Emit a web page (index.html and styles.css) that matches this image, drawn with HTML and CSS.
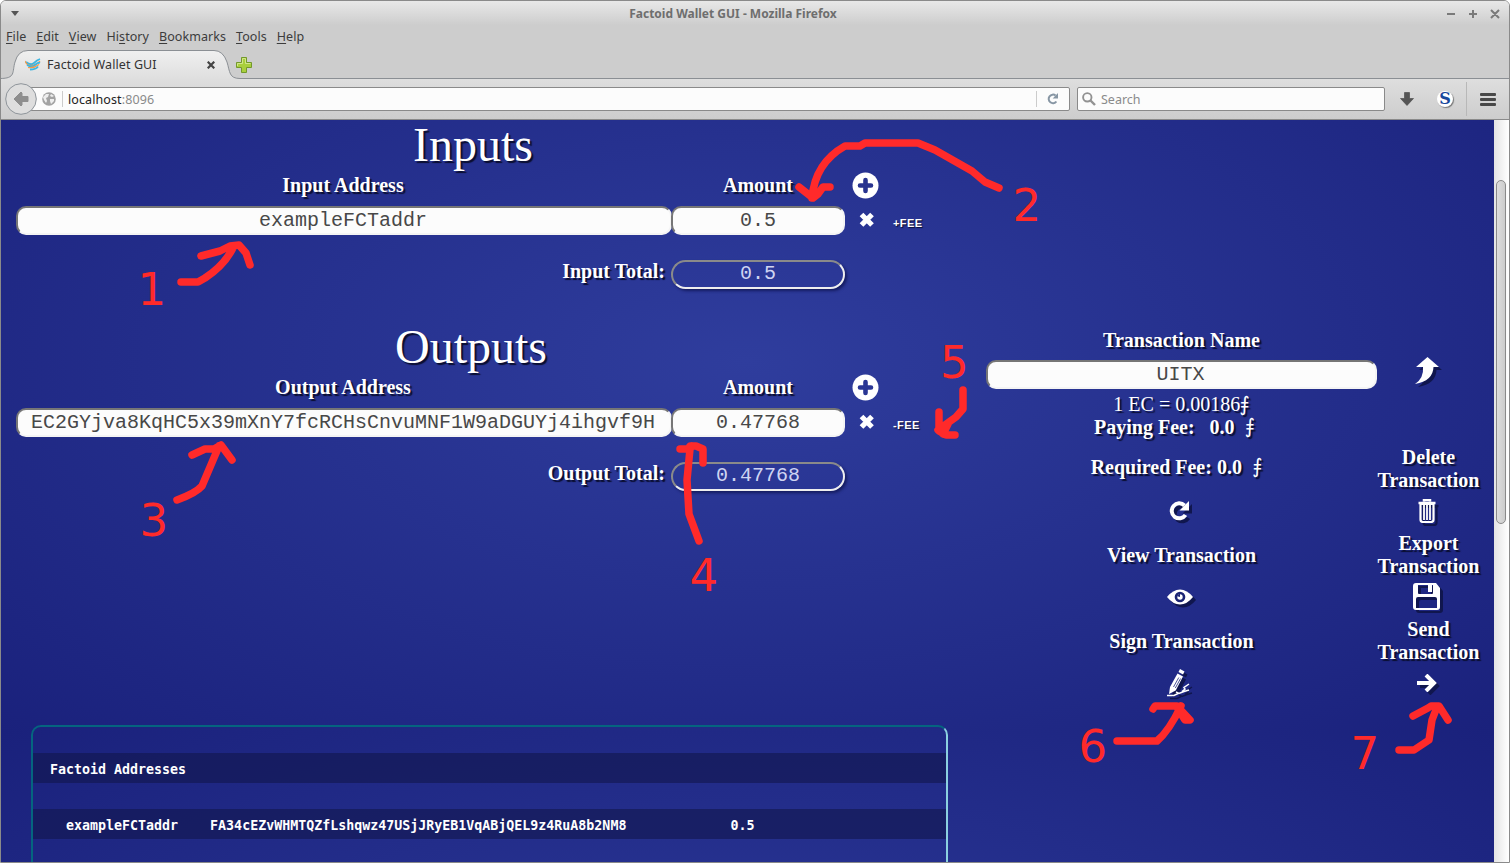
FILE: index.html
```html
<!DOCTYPE html>
<html lang="en">
<head>
<meta charset="utf-8">
<title>Factoid Wallet GUI</title>
<link rel="stylesheet" href="styles.css">
</head>
<body>
<div class="window">
  <header class="chrome">
    <div class="titlebar">
      <svg class="win-menu" width="8" height="5"><path d="M0 0h8L4 5z" fill="#555"/></svg>
      <span class="win-title">Factoid Wallet GUI - Mozilla Firefox</span>
      <svg class="win-buttons" width="54" height="10" fill="none" stroke="#7a7a7a" stroke-width="2"><path d="M1 5h8M23 5h8M27 1v8M45 1l8 8M53 1l-8 8"/></svg>
    </div>
    <nav class="menubar">
      <span><u>F</u>ile</span><span><u>E</u>dit</span><span><u>V</u>iew</span><span>Hi<u>s</u>tory</span><span><u>B</u>ookmarks</span><span><u>T</u>ools</span><span><u>H</u>elp</span>
    </nav>
    <div class="tabs">
      <svg class="tab-shape" width="1510" height="30">
        <defs><linearGradient id="tab" x1="0" y1="0" x2="0" y2="1"><stop offset="0" stop-color="#f0f0f0"/><stop offset="1" stop-color="#dedede"/></linearGradient></defs>
        <path d="M0 28.5C16 28.5 12 22 15 12Q18 .5 28 .5H214Q223 .5 227 12C230 22 229 28.5 240 28.5H1510V30H0z" fill="url(#tab)"/>
        <path d="M0 28.5C16 28.5 12 22 15 12Q18 .5 28 .5H214Q223 .5 227 12C230 22 229 28.5 240 28.5H1510" fill="none" stroke="#8b8f94"/>
      </svg>
      <svg class="favicon" width="16" height="13" fill="none" stroke-width="1.8"><path d="M1 4q5 4 8 1t6-4" stroke="#3db5e0"/><path d="M0 3q2 6 9 4 4-1 6-4" stroke="#f39a4b" stroke-width="1.200"/><path d="M2 7q5 3 8 0t5-2" stroke="#3db5e0"/><path d="M3 9.500q6 1 11-3" stroke="#f39a4b" stroke-width="1.200"/><path d="M5 11.500q6 0 8-3" stroke="#3db5e0"/></svg>
      <span class="tab-title">Factoid Wallet GUI</span>
      <svg class="tab-close" width="8" height="8" stroke="#444" stroke-width="2.200"><path d="M.7 .7l6.600 6.600M7.300 .7L.7 7.300"/></svg>
      <svg class="tab-new" width="16" height="16"><path d="M5.500 .5h5v5h5v5h-5v5h-5v-5h-5v-5h5z" fill="#a9cf3c" stroke="#72982b"/><path d="M6.500 6.500v-5h3v5h5M1.500 9v-2.500h5" fill="none" stroke="#d0e68a"/></svg>
    </div>
    <div class="toolbar">
      <svg class="back" width="32" height="32"><circle cx="16" cy="16" r="15.300" fill="#dedede" stroke="#8e949a"/><path d="M9 16l7-7 1 1v3.500h6v5h-6V22l-1 1z" fill="#8e8e8e" stroke="#8e8e8e" stroke-linejoin="round"/></svg>
      <div class="urlbar">
        <svg class="globe" width="14" height="14"><circle cx="7" cy="7" r="6.800" fill="#a3a3a3"/><path d="M1 5l3-3 3 0-1 3-2 1 1 3-1 2-2-3zM9 2l3 2-2 1-2-1zM8 7l4 0 0 2-3 3-1-3z" fill="#eee"/></svg>
        <i class="divider"></i>
        <span class="url">localhost<em>:8096</em></span>
        <i class="divider"></i>
        <svg class="reload" width="12" height="12"><path d="M9.400 8.500A4.300 4.300 0 1 1 8.600 2.500" fill="none" stroke="#8796a4" stroke-width="2"/><path d="M11 0v5.500H5.700z" fill="#8796a4"/></svg>
      </div>
      <div class="search">
        <svg width="14" height="14" fill="none" stroke="#929292"><circle cx="5.300" cy="5.300" r="4.200" stroke-width="1.900"/><path d="M8.500 8.500l4.500 4.500" stroke-width="2.400"/></svg>
        <span>Search</span>
      </div>
      <svg class="download" width="14" height="14"><path d="M4.500 .5h5v6h4L7 13.500 .5 6.500h4z" fill="#555" stroke="#444" stroke-width=".6"/></svg>
      <span class="s-badge">S</span>
      <i class="tool-sep"></i>
      <svg class="burger" width="16" height="13" fill="#484848"><rect width="16" height="3" rx="1"/><rect y="5" width="16" height="3" rx="1"/><rect y="10" width="16" height="3" rx="1"/></svg>
    </div>
  </header>

  <div class="viewport">
    <main class="page">
      <div class="wallet">
        <div class="ledger">
          <section>
            <h1>Inputs</h1>
            <div class="row heads"><b class="c-addr">Input Address</b><b class="c-amt">Amount</b><svg class="plus" width="27" height="27"><circle cx="13.500" cy="13.500" r="13" fill="#fff"/><path d="M13.500 8v11M8 13.500h11" stroke="#28338f" stroke-width="4.600" stroke-linecap="round"/></svg></div>
            <div class="row"><div class="field c-addr">exampleFCTaddr</div><div class="field c-amt">0.5</div><svg class="cross" width="16" height="16"><path d="M2.500 2.500l10.500 10.500M13 2.500L2.500 13" stroke="#fff" stroke-width="5.200"/></svg><span class="fee">+FEE</span></div>
            <div class="row totals"><b class="c-total">Input Total:</b><div class="field total c-amt">0.5</div></div>
          </section>
          <section>
            <h1 class="h-out">Outputs</h1>
            <div class="row heads"><b class="c-addr">Output Address</b><b class="c-amt">Amount</b><svg class="plus" width="27" height="27"><circle cx="13.500" cy="13.500" r="13" fill="#fff"/><path d="M13.500 8v11M8 13.500h11" stroke="#2a3694" stroke-width="4.600" stroke-linecap="round"/></svg></div>
            <div class="row"><div class="field c-addr">EC2GYjva8KqHC5x39mXnY7fcRCHsCnvuMNF1W9aDGUYj4ihgvf9H</div><div class="field c-amt">0.47768</div><svg class="cross" width="16" height="16"><path d="M2.500 2.500l10.500 10.500M13 2.500L2.500 13" stroke="#fff" stroke-width="5.200"/></svg><span class="fee">-FEE</span></div>
            <div class="row totals"><b class="c-total">Output Total:</b><div class="field total c-amt">0.47768</div></div>
          </section>
        </div>

        <div class="tx">
          <b class="tx-label">Transaction Name</b>
          <div class="field tx-name">UITX</div>
          <div class="rate">1 EC = 0.00186<i class="fct">⨎</i></div>
          <div class="paying"><b>Paying Fee:</b><b class="paid">0.0</b><i class="fct">⨎</i></div>
          <div class="required"><b>Required Fee: 0.0</b><i class="fct">⨎</i></div>
          <div class="icon refresh"><svg width="22" height="22"><path d="M16.500 15A7.500 7.500 0 1 1 15.500 5.500" fill="none" stroke="#fff" stroke-width="4"/><path d="M20 1v9.500h-9.500z" fill="#fff"/></svg></div>
          <b>View Transaction</b>
          <div class="icon"><svg width="26" height="16"><path d="M0 8Q6 .5 13 .5T26 8Q20 15.500 13 15.500T0 8z" fill="#fff"/><circle cx="13" cy="8" r="5.300" fill="#1c2574"/><circle cx="13" cy="8" r="2.700" fill="#fff"/><path d="M13 8V4.500L9.500 7z" fill="#1c2574"/></svg></div>
          <b>Sign Transaction</b>
          <div class="icon"><svg width="26" height="28" fill="none" stroke="#fff"><path d="M13 0l4.500 2.500-1.500 3-4.500-2.500z" fill="#fff" stroke="none"/><path d="M10.500 4.500l5.500 3-7.300 14L2 25l1-7z" fill="#fff" stroke="none"/><path d="M11.800 8.500L6.500 18M13.600 9.500L8.300 19" stroke="#202a7b" stroke-width=".8"/><path d="M0 26.500h7l4-2M9 23l3 1.500 5-2 5-1.500M22 15l-5 3.500 1 1.500-3 2.500" stroke-width="1.500"/></svg></div>
        </div>

        <div class="actions">
          <svg class="up" width="26" height="28"><path d="M13.500 0L25 10h-5.500Q19 24 1 27Q10 21 9 10H2z" fill="#fff"/></svg>
          <b>Delete<br>Transaction</b>
          <div class="icon"><svg width="18" height="24" fill="none" stroke="#fff"><path d="M.5 4h17M6 2.500V1h6v1.500" stroke-width="2.500"/><path d="M2.500 5v15.500Q2.500 23 5 23h8q2.500 0 2.500-2.500V5z" stroke-width="2.200"/><path d="M6 6v15M9 6v15M12 6v15" stroke-width="1.800"/></svg></div>
          <b>Export<br>Transaction</b>
          <div class="icon"><svg width="27" height="27"><path fill="#fff" fill-rule="evenodd" d="M3 0h20l4 5v19q0 3-3 3H3q-3 0-3-3V3q0-3 3-3zM5 2v8q0 1 1 1h13q1 0 1-1V2h-1v7h-4V2zM3 16v9h21v-9q0-2-2-2H5q-2 0-2 2z"/></svg></div>
          <b>Send<br>Transaction</b>
          <div class="icon"><svg width="20" height="18"><path d="M0 9h17M9 1l8 8-8 8" fill="none" stroke="#fff" stroke-width="4"/></svg></div>
        </div>
      </div>

      <div class="panel">
        <pre class="band">Factoid Addresses</pre>
        <pre class="band">  exampleFCTaddr    FA34cEZvWHMTQZfLshqwz47USjJRyEB1VqABjQEL9z4RuA8b2NM8             0.5</pre>
      </div>
    </main>
    <div class="scroll"><div class="thumb"></div></div>
  </div>

  <svg class="notes" width="1510" height="863">
    <g class="strokes">
      <path d="M181 282H198L205 278Q225 265 234 246M201 256L220 251L230 246L239 245L246 253L250 265"/>
      <path d="M999 188L985 182L972 171L935 150L918 143H865L860 146H845Q815 163 812 198M799 187L813 198L818 194L823 187H830"/>
      <path d="M177 500Q196 493 202 486Q211 465 219 446M192 455L205 449H214L221 445L232 460"/>
      <path d="M699 541L689 514L687 480L690 449L692 446M680 449H688L690 446H696L703 449V463"/>
      <path d="M963 390V409L956 417L938 430M939 412V431L946 435H955M948 424L943 434"/>
      <path d="M1117 741H1157Q1169 731 1181 706M1153 709L1155 706H1177L1190 720H1185L1178 709"/>
      <path d="M1399 750H1414L1429 740L1432 720L1437 707M1413 716L1428 708L1431 706H1439L1448 720"/>
    </g>
    <g class="digits"><text x="137.500" y="305">1</text><text x="1012.500" y="221">2</text><text x="139.500" y="536">3</text><text x="689.500" y="591">4</text><text x="940" y="378">5</text><text x="1078.500" y="762">6</text><text x="1350.500" y="769">7</text></g>
  </svg>
</div>
</body>
</html>
```
FILE: styles.css
```css
* { box-sizing: border-box; }
body { margin: 0; background: #fff; }
svg { display: block; flex: none; }
b, span { white-space: nowrap; }
.window {
  position: relative; width: 1510px; height: 863px; overflow: hidden;
  border: 1px solid #8a8a8a; border-radius: 6px 6px 0 0;
  display: flex; flex-direction: column;
  font-family: "Noto Sans", "Open Sans", sans-serif; font-size: 12.5px; color: #3c3c3c;
}
.chrome { height: 119px; flex: none; background: linear-gradient(#e8e8e8 0, #cdcdcd 24px); border-bottom: 1px solid #8a8a8a; }
.titlebar { height: 25px; display: flex; align-items: center; padding: 0 9px 0 10px; }
.win-title { flex: 1; text-align: center; font-weight: bold; font-size: 12px; color: #6e6e6e; padding-left: 1px; }
.menubar { height: 24px; display: flex; align-items: center; padding: 0 0 3px 5px; gap: 9.9px; letter-spacing: .08px; }
.menubar u { text-underline-offset: 2px; }
.tabs { position: relative; height: 29px; display: flex; align-items: center; padding-left: 24px; }
.tab-shape { position: absolute; left: -1px; top: 0; }
.favicon, .tab-title, .tab-close, .tab-new { position: relative; }
.tab-title { margin-left: 6px; width: 160px; color: #333; letter-spacing: .1px; }
.tab-new { margin-left: 21px; }
.toolbar { height: 40px; display: flex; align-items: center; background: linear-gradient(#dedede, #cdcdcd); padding-left: 4px; }
.back { position: relative; z-index: 1; }
.urlbar { width: 1047px; height: 24px; margin-left: -14px; background: #fcfcfc; border: 1px solid #8a8a8a; border-radius: 2px; display: flex; align-items: center; padding-left: 18px; }
.divider { width: 1px; height: 16px; background: #ccc; }
.globe { margin-right: 6px; }
.url { width: 968px; margin-left: 5px; color: #222; letter-spacing: .1px; }
.url em { font-style: normal; color: #8a8a8a; }
.reload { margin-left: 10px; }
.search { width: 308px; height: 24px; margin-left: 7px; background: #fcfcfc; border: 1px solid #8a8a8a; border-radius: 2px; display: flex; align-items: center; gap: 5px; padding-left: 4px; color: #8a8a8a; }
.download { margin-left: 15px; }
.s-badge { width: 16px; height: 16px; margin-left: 23px; border-radius: 50%; background: #fff; box-shadow: 1px 1px 1px #777; text-align: center; font: bold 16px/16px "DejaVu Serif", serif; color: #17489c; }
.tool-sep { width: 1px; height: 34px; margin: 0 13px 0 13px; background: #b8b8b8; }

.viewport { flex: 1; min-height: 0; display: flex; }
.page {
  width: 1493px; height: 742px; color: #fff; font: 20px "Liberation Serif", serif; text-shadow: 2px 2px 1px #0a0e30;
  background: radial-gradient(ellipse farthest-corner, #2f3d9d, #1a217c) 0 -130px / 1493px 742px;
}
.wallet { height: 605px; display: flex; }
.ledger { width: 985px; }
section { height: 202px; }
h1 { margin: 0; width: 944px; height: 48px; text-align: center; font-weight: normal; font-size: 48px; line-height: 50px; }
.h-out { width: 940px; }
.row { display: flex; align-items: center; height: 29px; padding-left: 15px; }
.heads { height: 36px; margin-bottom: 2px; padding-bottom: 2px; }
.c-addr { width: 656px; text-align: center; }
.c-amt { width: 174px; margin-left: -1px; text-align: center; }
.heads .c-addr { padding-right: 2px; }
.plus { margin-left: 7px; }
.cross { margin: -1px 0 0 14px; }
.fee { margin: 5px 0 0 18px; font: bold 11px "Liberation Sans", sans-serif; letter-spacing: .4px; text-shadow: 1px 1px 1px #0a0e30; }
.field { height: 29px; background: #fcfcfc; border: 2px solid; border-color: #767676 #f4f4f4 #f4f4f4 #767676; border-radius: 10px; color: #484848; font: 20px/25px "Liberation Mono", monospace; text-align: center; text-shadow: none; }
.field.c-addr { padding-right: 2px; }
.totals { margin-top: 25px; }
.c-total { width: 650px; text-align: right; padding: 0 1px 6px 0; }
.total { margin-left: 5px; line-height: 24px; background: none; border-color: #8a8a8a #eee #eee #8a8a8a; border-radius: 15px; color: #cfd4f2; box-shadow: 2px 2px 3px #151c60; }
.tx { width: 391px; padding-top: 209px; display: flex; flex-direction: column; align-items: center; line-height: 23px; }
.tx-label { height: 31px; }
.tx-name { width: 391px; padding-right: 2px; }
.rate { margin-top: 4px; height: 23px; }
.fct { font: 20px/20px "DejaVu Sans", sans-serif; }
.rate .fct { line-height: 10px; margin-left: -1px; }
.paying { display: flex; height: 23px; padding-right: 14px; }
.paid { margin: 0 10px 0 15px; }
.required { display: flex; height: 23px; margin-top: 17px; gap: 10px; padding-right: 10px; }
.icon { width: 100%; height: 63px; display: flex; align-items: center; justify-content: center; padding-right: 4px; }
.refresh { height: 65px; padding-bottom: 2px; }
.icon svg, .up { filter: drop-shadow(3px 3px 0 #10164e); }
.tx .icon:not(.refresh) { padding-bottom: 4px; }
.actions { width: 103px; padding-top: 237px; display: flex; flex-direction: column; align-items: center; text-align: center; line-height: 23px; }
.up { margin: 0 4px 61px 0; }
.actions .icon { height: 40px; padding-bottom: 3px; }
.panel { width: 917px; height: 137px; margin-left: 30px; border: 2px solid #05657f; border-right-color: #8bd0e0; border-bottom: 0; border-radius: 10px 10px 0 0; text-shadow: none; padding-top: 26px; }
.band { margin: 0 0 26px; height: 30px; padding-left: 17px; background: rgba(18, 23, 78, .62); font: bold 13.300px/33px "DejaVu Sans Mono", monospace; }
.scroll { width: 15px; background: linear-gradient(90deg, #e4e4e4, #fff); padding: 60px 0 0 2px; }
.thumb { width: 10px; height: 344px; border: 1px solid #8a8a8a; border-radius: 5px; background: linear-gradient(90deg, #ddd, #ccc); }
.notes { position: absolute; left: -1px; top: -1px; z-index: 3; }
.strokes { fill: none; stroke: #ff2a2a; stroke-width: 7.5; stroke-linecap: round; stroke-linejoin: round; }
.digits { fill: #ff2a2a; font: 45px "DejaVu Sans", sans-serif; }
```
